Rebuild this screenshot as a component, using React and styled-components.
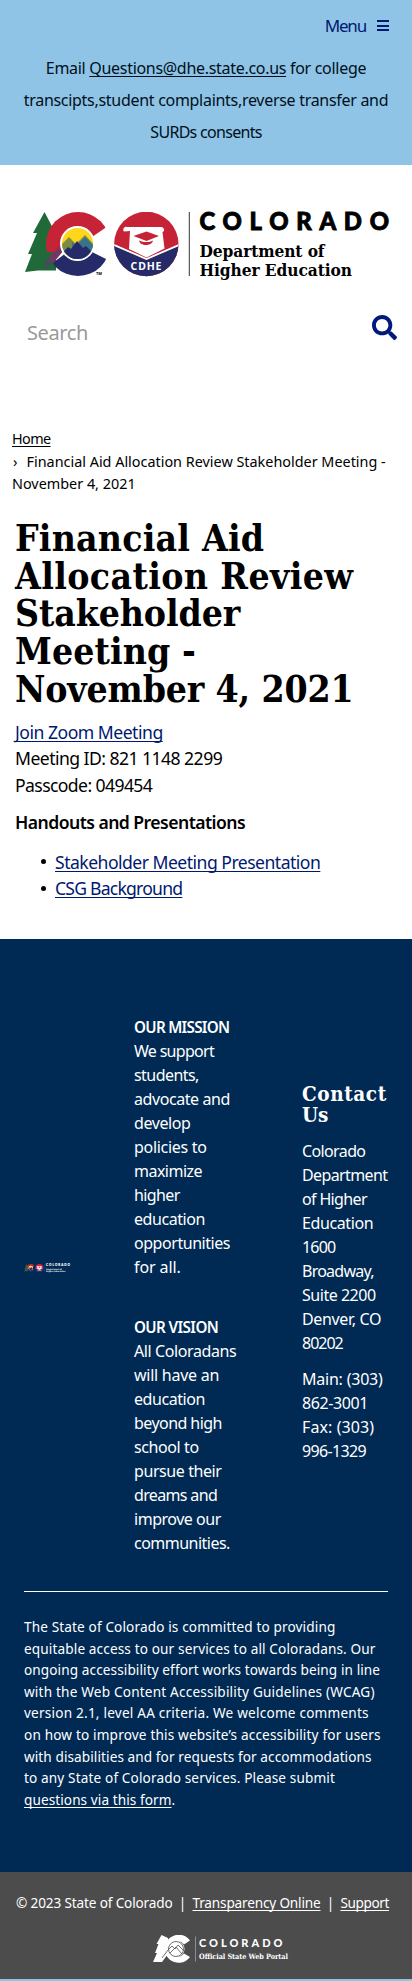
import React from "react";
import styled, { createGlobalStyle } from "styled-components";
import { FaSearch } from "react-icons/fa";

const sans = '"Noto Sans", sans-serif';
const slab = '"DejaVu Serif Condensed", "DejaVu Serif", serif';

const Global = createGlobalStyle`
  * { box-sizing: border-box; }
  body { margin: 0; background: #8fc4e6; font-family: ${sans}; color: #000; }
  h1, h2, p, ul { margin: 0; padding: 0; font-weight: inherit; }
  svg { display: block; }
`;

const Page = styled.div`
  width: 412px;
  background: #fff;
`;

const Line = styled.span`
  display: block;
  white-space: nowrap;
  letter-spacing: ${(p) => p.$ls || 0}px;
`;

const Link = styled.a`
  color: ${(p) => p.$color || "inherit"};
  text-decoration: underline;
  text-decoration-thickness: 1px;
  text-underline-offset: 2px;
  text-decoration-skip-ink: none;
`;

/* Top bar */
const TopBar = styled.header`
  height: 165px;
  padding-top: 12px;
  background: #8fc4e6;
`;
const MenuButton = styled.div`
  display: flex;
  justify-content: flex-end;
  align-items: center;
  gap: 11px;
  height: 27px;
  padding-right: 23px;
  margin-bottom: 13px;
  color: #001970;
  font-size: 17px;
`;
const Bars = styled.span`
  display: grid;
  gap: 2.5px;
  width: 12px;
  &::before, &::after, i { content: ""; height: 2px; background: currentColor; }
`;
const Notice = styled.p`
  font-size: 16px;
  line-height: 32px;
  color: #001020;
  text-align: center;
`;

/* Masthead */
const Masthead = styled.div`
  padding: 47px 15px 0 24px;
  height: 263px;
`;
const SearchForm = styled.form`
  display: flex;
  justify-content: space-between;
  align-items: flex-start;
  margin-top: 35px;
  color: #00197a;
`;
const SearchInput = styled.input`
  width: 300px;
  height: 26px;
  margin-top: 5px;
  padding: 0 3px;
  border: 0;
  background: none;
  font: 20px/26px ${sans};
  letter-spacing: -0.39px;
  &::placeholder { color: #999; opacity: 1; }
`;

/* Content */
const Breadcrumb = styled.nav`
  padding-left: 12px;
  font-size: 14.4px;
  line-height: 22px;
`;
const Crumb = styled.div`
  margin-top: 1px;
`;
const Chevron = styled.span`
  display: inline-block;
  width: 14.5px;
  padding-left: 1px;
  letter-spacing: 0;
`;
const Main = styled.main`
  height: 444px;
  padding: 25px 15px 0;
  font-size: 17.6px;
  line-height: 26.4px;
`;
const Title = styled.h1`
  margin-bottom: 10.500px;
  font: 700 37px/37.7px ${slab};
`;
const Subhead = styled.p`
  margin: 11px 0 13px;
  font-weight: 600;
`;
const List = styled.ul`
  list-style: none;
`;
const Item = styled.li`
  display: flex;
  align-items: center;
  padding-left: 26px;
  gap: 9px;
  &::before { content: ""; width: 5px; height: 5px; border-radius: 50%; background: #000; }
`;

/* Footer */
const Footer = styled.footer`
  height: 933px;
  padding: 76px 24px 0;
  background: #002a54;
  color: #fff;
`;
const Columns = styled.div`
  display: grid;
  grid-template-columns: 110px 168px 1fr;
  align-items: start;
  height: 576px;
  font-size: 16px;
  line-height: 24px;
`;
const LogoCell = styled.div`
  padding-top: 249px;
`;
const Statement = styled.section`
  & + & { margin-top: 36px; }
`;
const StatementTitle = styled.h2`
  font-size: 15.2px;
  font-weight: 650;
`;
const Contact = styled.section`
  padding-top: 68.5px;
`;
const ContactTitle = styled.h2`
  margin-bottom: 12px;
  font: 700 20.5px/21.8px ${slab};
`;
const Address = styled.p`
  & + & { margin-top: 12px; }
`;
const Accessibility = styled.p`
  padding-top: 24px;
  border-top: 1px solid #fff;
  font-size: 13.6px;
  line-height: 21.6px;
`;
const BottomBar = styled.div`
  height: 107px;
  padding: 20px 16px 0;
  background: #4c4c4c;
  color: #fff;
  font-size: 13.6px;
  line-height: 22px;
`;
const Legal = styled.div`
  display: flex;
  justify-content: space-between;
  width: 373px;
`;
const Portal = styled.div`
  margin: 21px 0 0 137px;
`;
const Edge = styled.div`
  height: 2px;
  background: #8fc4e6;
`;

function DepartmentLogo({ width = 365, ink = "#000" }) {
  return (
    <svg width={width} height={(width * 68) / 365} viewBox="0 0 365 68" overflow="visible" role="img">
      <path d="M20.5 0 9 21h4L4 42h4L1 60l13-1.500h18V22z" fill="#1f6a38" />
      <clipPath id="ring"><circle cx="54" cy="32" r="32" /></clipPath>
      <g clipPath="url(#ring)">
        <path d="M22 0h64v40H22z" fill="#c62336" />
        <path d="M54 32 22 56v12h64V38z" fill="#252a69" />
        <path d="M22 48 40 29v9L26 55z" fill="#913058" />
      </g>
      <path d="M68 25 84 14l8 10v20l-6 5-18-9z" fill={ink === "#000" ? "#fff" : "#002a54"} />
      <path d="M20 50 41 32l-5 10-14 16z" fill="#57406a" opacity=".6" />
      <circle cx="53.500" cy="31.500" r="17.500" fill="#fff" />
      <clipPath id="sun"><circle cx="53.500" cy="31.500" r="15.500" /></clipPath>
      <g clipPath="url(#sun)">
        <path d="M36 14h36v36H36z" fill="#ffd61a" />
        <path d="m36 34 9-9 7 7 9-9 12 13v16H36z" fill="#7a8b45" />
        <path d="m48 30 4 4 9-9 12 12v12H48z" fill="#38738a" />
        <path d="m36 43 8-8 3 2 6-8 6 7 3-2 12 12v9H36z" fill="#252a69" />
      </g>
      <text x="72" y="63" fontFamily={sans} fontSize="4" fontWeight="700" fill={ink}>TM</text>

      <clipPath id="seal"><circle cx="122.300" cy="32" r="32.200" /></clipPath>
      <g clipPath="url(#seal)">
        <path d="M90 0h65v65H90z" fill="#c62336" />
        <path d="m90 33 32.500 15L155 33v32H90z" fill="#252a69" />
        <path d="m89 32.500 33.500 14.500L156 32.500" fill="none" stroke="#fff" strokeWidth="1.800" />
      </g>
      <path d="M103 15h34c3.500 0 4 4.500 1.500 5l2 16.500-18 9-17.500-8.500 1-18-6 .5c-2-2 .5-5.500 3-4.500z" fill="#fff" />
      <path d="m109.500 24 13-4.500 12.500 4.500-12.500 5z" fill="#c62336" />
      <path d="M115 28.500c5 2 10 2 14 0-1 6-13 6-14 0z" fill="#c62336" />
      <text x="106.500" y="57.500" textLength="31" fontFamily={sans} fontSize="10.500" fontWeight="700" fill="#fff">CDHE</text>

      <path d="M165.300 0v64" stroke={ink} strokeWidth="1" opacity=".8" />
      <g fontFamily="Lato, sans-serif" fontSize="23.800" fontWeight="900" fill={ink} stroke={ink} strokeWidth=".9">
        <text x="175.500" y="17.500" textLength="189.500">COLORADO</text>
      </g>
      <text x="175.500" y="45" textLength="125" fontFamily={slab} fontSize="17.200" fontWeight="700" fill={ink}>Department of</text>
      <text x="175.500" y="64" textLength="152.500" fontFamily={slab} fontSize="17.200" fontWeight="700" fill={ink}>Higher Education</text>
    </svg>
  );
}

function PortalLogo() {
  return (
    <svg width="140" height="28" viewBox="0 0 140 28" role="img">
      <path d="M8.500 0 3.500 9h2L2 18h2L0 27h9l6-8V3z" fill="#fff" />
      <path d="M37 5.500A14 14 0 1 0 37 22l-6-3.500a8 8 0 1 1 0-9z" fill="#fff" />
      <circle cx="23" cy="14" r="8.500" fill="#fff" />
      <circle cx="23" cy="14" r="7.500" fill="none" stroke="#4c4c4c" strokeWidth=".8" />
      <path d="m9 23 6-8 4-4 3 3 3-4 6 6M17 18l6-6 6 7" fill="none" stroke="#4c4c4c" strokeWidth=".8" />
      <path d="M42.500 1.500v25" stroke="#aaa" strokeWidth=".7" />
      <text x="46" y="11.500" textLength="83.500" fontFamily="Lato, sans-serif" fontSize="11" fontWeight="900" fill="#fff">COLORADO</text>
      <text x="46" y="23.500" textLength="89" fontFamily={slab} fontSize="7.300" fontWeight="700" fill="#fff">Official State Web Portal</text>
    </svg>
  );
}

const titleLines = [
  ["Financial Aid", 0.2], ["Allocation Review", 0.38], ["Stakeholder", -0.1],
  ["Meeting -", 0.1], ["November 4, 2021", -0.15],
];
const mission = [
  ["We support", -0.7], ["students,", -0.56], ["advocate and", -0.42], ["develop", -0.42],
  ["policies to", -0.3], ["maximize", -0.52], ["higher", -0.6], ["education", -0.44],
  ["opportunities", -0.45], ["for all.", -0.1],
];
const vision = [
  ["All Coloradans", -0.4], ["will have an", -0.25], ["education", -0.44], ["beyond high", -0.56],
  ["school to", -0.4], ["pursue their", -0.42], ["dreams and", -0.65], ["improve our", -0.48],
  ["communities.", -0.52],
];
const address = [
  ["Colorado", -0.62], ["Department", -0.62], ["of Higher", -0.65], ["Education", -0.4],
  ["1600", -0.8], ["Broadway,", -0.75], ["Suite 2200", -0.47], ["Denver, CO", -0.35], ["80202", -1],
];
const phones = [["Main: (303)", -0.22], ["862-3001", -0.4], ["Fax: (303)", 0.1], ["996-1329", -0.65]];
const accessibility = [
  ["The State of Colorado is committed to providing", 0.13],
  ["equitable access to our services to all Coloradans. Our", 0.13],
  ["ongoing accessibility effort works towards being in line", 0.1],
  ["with the Web Content Accessibility Guidelines (WCAG)", 0.19],
  ["version 2.1, level AA criteria. We welcome comments", 0.21],
  ["on how to improve this website’s accessibility for users", 0.167],
  ["with disabilities and for requests for accommodations", 0.086],
  ["to any State of Colorado services. Please submit", 0.135],
];

const lines = (items) => items.map(([text, ls]) => <Line key={text} $ls={ls}>{text}</Line>);

export default function App() {
  return (
    <Page>
      <Global />
      <TopBar>
        <MenuButton><Line $ls={-1.2}>Menu</Line><Bars><i /></Bars></MenuButton>
        <Notice>
          <Line $ls={-0.3}>Email <Link>Questions@dhe.state.co.us</Link> for college</Line>
          <Line $ls={-0.293}>transcipts,student complaints,reverse transfer and</Line>
          <Line $ls={-0.7}>SURDs consents</Line>
        </Notice>
      </TopBar>
      <Masthead>
        <DepartmentLogo />
        <SearchForm>
          <SearchInput placeholder="Search" aria-label="Search" />
          <FaSearch size={25} />
        </SearchForm>
      </Masthead>
      <Breadcrumb>
        <Line $ls={-0.6}><Link>Home</Link></Line>
        <Crumb>
          <Line><Chevron>›</Chevron>Financial Aid Allocation Review Stakeholder Meeting -</Line>
          <Line>November 4, 2021</Line>
        </Crumb>
      </Breadcrumb>
      <Main>
        <Title>{lines(titleLines)}</Title>
        <Line $ls={-0.5}><Link $color="#001970">Join Zoom Meeting</Link></Line>
        <Line $ls={-0.55}>Meeting ID: 821 1148 2299</Line>
        <Line $ls={-0.6}>Passcode: 049454</Line>
        <Subhead><Line $ls={-0.545}>Handouts and Presentations</Line></Subhead>
        <List>
          <Item><Line $ls={-0.525}><Link $color="#001970">Stakeholder Meeting Presentation</Link></Line></Item>
          <Item><Line $ls={-0.78}><Link $color="#001970">CSG Background</Link></Line></Item>
        </List>
      </Main>
      <Footer>
        <Columns>
          <LogoCell><DepartmentLogo width={46} ink="#fff" /></LogoCell>
          <div>
            <Statement>
              <StatementTitle><Line $ls={-0.7}>OUR MISSION</Line></StatementTitle>
              {lines(mission)}
            </Statement>
            <Statement>
              <StatementTitle><Line $ls={-0.6}>OUR VISION</Line></StatementTitle>
              {lines(vision)}
            </Statement>
          </div>
          <Contact>
            <ContactTitle><Line $ls={0.6}>Contact</Line><Line>Us</Line></ContactTitle>
            <Address>{lines(address)}</Address>
            <Address>{lines(phones)}</Address>
          </Contact>
        </Columns>
        <Accessibility>
          {lines(accessibility)}
          <Line $ls={0.08}><Link>questions via this form</Link>.</Line>
        </Accessibility>
      </Footer>
      <BottomBar>
        <Legal>
          <Line $ls={-0.148}>© 2023 State of Colorado</Line>
          <span>|</span>
          <Line $ls={-0.17}><Link>Transparency Online</Link></Line>
          <span>|</span>
          <Line $ls={-0.4}><Link>Support</Link></Line>
        </Legal>
        <Portal><PortalLogo /></Portal>
      </BottomBar>
      <Edge />
    </Page>
  );
}
